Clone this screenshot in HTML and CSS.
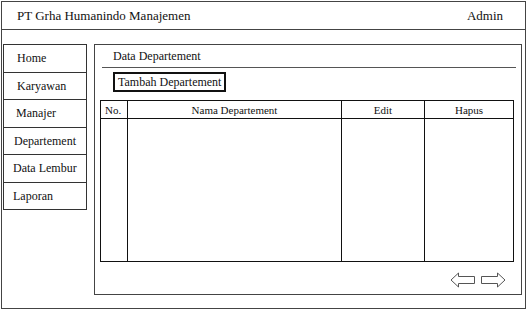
FILE: index.html
```html
<!DOCTYPE html>
<html lang="id">
<head>
    <meta charset="utf-8">
    <meta name="viewport" content="width=device-width, initial-scale=1.0">
    <title>Data Departement</title>
    <link rel="stylesheet" href="styles.css">
</head>
<body>
    <div id="frame">
        <div class="header">
            <span class="brand">PT Grha Humanindo Manajemen</span>
            <span class="user">Admin</span>
        </div>

        <div class="body">
            <ul class="menu">
                <li class="home">Home</li>
                <li class="karyawan">Karyawan</li>
                <li class="manajer">Manajer</li>
                <li class="departement">Departement</li>
                <li>Data Lembur</li>
                <li>Laporan</li>
            </ul>

            <div class="panel">
                <div class="panel-title">Data Departement</div>

                <button class="add-button">Tambah Departement</button>

                <table class="grid">
                    <thead>
                        <tr>
                            <th class="col-no">No.</th>
                            <th class="col-name">Nama Departement</th>
                            <th class="col-edit">Edit</th>
                            <th class="col-del">Hapus</th>
                        </tr>
                    </thead>
                    <tbody>
                        <tr>
                            <td></td>
                            <td></td>
                            <td></td>
                            <td></td>
                        </tr>
                    </tbody>
                </table>

                <div class="pager">
                    <!-- previous -->
                    <svg width="26" height="16" viewBox="0 0 26 16">
                        <path d="M1 8 L8.5 1 L8.5 4.5 L24.5 4.5 L24.5 11.5 L8.5 11.5 L8.5 15 Z" fill="#fff" stroke="#555" stroke-width="1"/>
                    </svg>
                    <!-- next -->
                    <svg width="26" height="16" viewBox="0 0 26 16">
                        <path d="M25 8 L17.5 1 L17.5 4.5 L1.5 4.5 L1.5 11.5 L17.5 11.5 L17.5 15 Z" fill="#fff" stroke="#555" stroke-width="1"/>
                    </svg>
                </div>
            </div>
        </div>
    </div>
</body>
</html>
```

FILE: styles.css
```css
body {
    margin: 0;
    background: #fff;
    font-family: "Liberation Serif", "Times New Roman", serif;
    color: #111;
}
#frame {
    box-sizing: border-box;
    margin: 1px 0 0 1px;
    width: 525px;
    height: 308px;
    border: 1px solid #444;
    display: flex;
    flex-direction: column;
}
.header {
    height: 27px;
    border-bottom: 1px solid #444;
    display: flex;
    align-items: center;
    justify-content: space-between;
    padding: 0 22px 0 15px;
    font-size: 13px;
}
.body {
    flex: 1;
    display: flex;
    align-items: flex-start;
    padding: 14px 0 0 1px;
    gap: 7px;
}
.menu {
    list-style: none;
    margin: 0;
    padding: 0;
    width: 84px;
    box-sizing: border-box;
    border: 1px solid #333;
    border-bottom: none;
    font-size: 12px;
}
.menu li {
    box-sizing: border-box;
    height: 27.5px;
    line-height: 26px;
    border-bottom: 1px solid #333;
    padding-left: 9px;
}
.menu .home,
.menu .karyawan {
    padding-left: 13px;
}
.menu .manajer {
    padding-left: 12px;
}
.menu .departement {
    padding-left: 10px;
}
.panel {
    box-sizing: border-box;
    width: 428px;
    height: 251px;
    border: 1px solid #444;
    display: flex;
    flex-direction: column;
    align-items: flex-start;
}
.panel-title {
    align-self: stretch;
    margin: 0 5px 0 7px;
    height: 22px;
    line-height: 23px;
    padding-left: 11px;
    border-bottom: 1px solid #555;
    font-size: 12px;
}
.add-button {
    margin: 4px 0 0 18px;
    height: 20px;
    padding: 0 3px;
    border: 2px solid #111;
    background: #fff;
    font-family: inherit;
    font-size: 12px;
    color: #111;
    line-height: 15px;
}
.grid {
    margin: 8px 0 0 5px;
    width: 414px;
    height: 162px;
    border-collapse: collapse;
    border: 1px solid #111;
    font-size: 11px;
    table-layout: fixed;
}
.grid th {
    height: 17px;
    padding: 0;
    font-weight: normal;
    border: 1px solid #111;
    text-align: center;
}
.grid td {
    border: 1px solid #111;
    padding: 0;
}
.grid .col-no {
    width: 22px;
    text-align: left;
    padding-left: 4px;
}
.grid .col-name {
    width: 213px;
}
.grid .col-edit {
    width: 82px;
}
.pager {
    align-self: flex-end;
    margin: 10px 15px 0 0;
    display: flex;
    gap: 4px;
}
.pager svg {
    display: block;
}
```
